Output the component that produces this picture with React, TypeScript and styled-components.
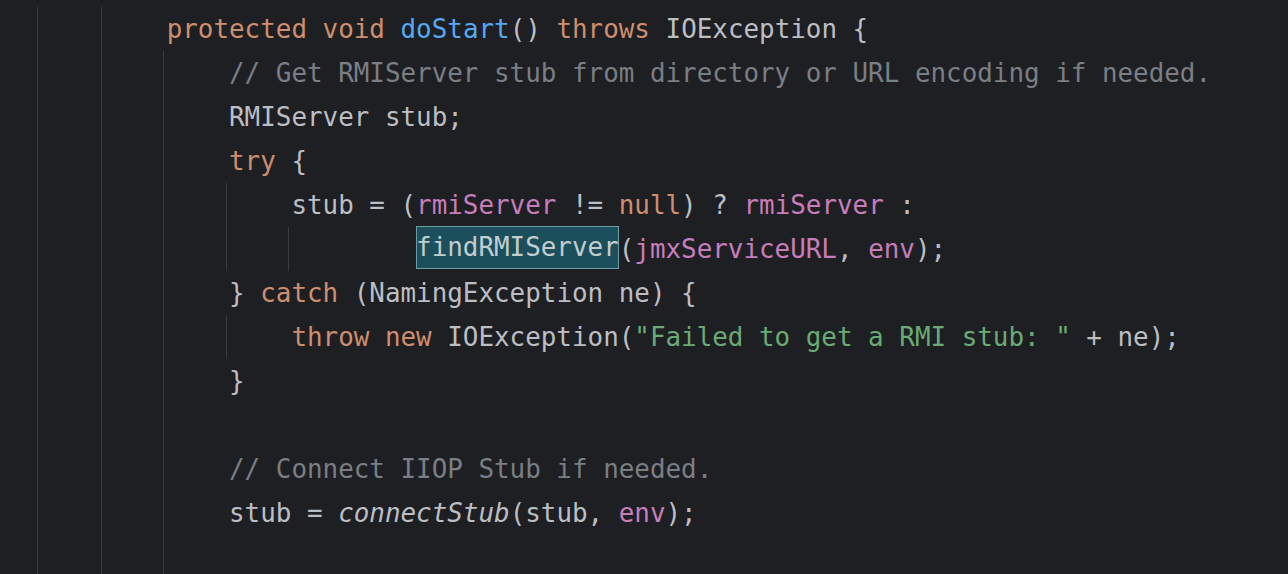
import React from "react";
import styled, { createGlobalStyle, css } from "styled-components";

const GlobalStyle = createGlobalStyle`
  html, body {
    margin: 0;
    padding: 0;
    background: #1e1f22;
    overflow: hidden;
  }
`;

const Editor = styled.div`
  box-sizing: border-box;
  width: 1288px;
  height: 574px;
  overflow: hidden;
  background: #1e1f22;
  padding: 7px 0 0 38.5px;
  font-family: "DejaVu Sans Mono", "Liberation Mono", monospace;
  font-size: 25.9px;
  color: #bcbec4;
`;

const Line = styled.div`
  display: flex;
  align-items: stretch;
  height: 44px;
  line-height: 44px;
  white-space: pre;
`;

const Guide = styled.span<{ $show: boolean }>`
  flex: none;
  box-sizing: border-box;
  width: 4ch;
  border-left: 1px solid ${(p) => (p.$show ? "#3a3c41" : "transparent")};

  &:first-child {
    width: calc(4ch + 1.5px);
    margin-left: -1.5px;
  }
`;

const Code = styled.span`
  padding-left: 3.5px;
`;

type Kind = "kw" | "fn" | "cm" | "field" | "str" | "it";

const colors: Record<Kind, string> = {
  kw: "#cf8e6d",
  fn: "#56a8f5",
  cm: "#7a7e85",
  field: "#c77dbb",
  str: "#6aab73",
  it: "#bcbec4",
};

const Tok = styled.span<{ $k: Kind }>`
  color: ${(p) => colors[p.$k]};
  ${(p) =>
    p.$k === "it" &&
    css`
      font-style: italic;
    `}
`;

const Match = styled.span`
  display: inline-block;
  height: 43px;
  line-height: 42px;
  vertical-align: top;
  margin-top: -1px;
  background: #1b4f5b;
  box-shadow: inset 0 0 0 1px #6f9ba3;
  color: #c3cdd0;
`;

type Row = { guides: boolean[]; content: React.ReactNode };

const g = (n: number, shown: number) =>
  Array.from({ length: n }, (_, i) => i < shown);

const rows: Row[] = [
  {
    guides: g(2, 2),
    content: (
      <>
        <Tok $k="kw">protected</Tok> <Tok $k="kw">void</Tok>{" "}
        <Tok $k="fn">doStart</Tok>() <Tok $k="kw">throws</Tok> IOException {"{"}
      </>
    ),
  },
  {
    guides: g(3, 3),
    content: (
      <Tok $k="cm">// Get RMIServer stub from directory or URL encoding if needed.</Tok>
    ),
  },
  { guides: g(3, 3), content: <>RMIServer stub;</> },
  {
    guides: g(3, 3),
    content: (
      <>
        <Tok $k="kw">try</Tok> {"{"}
      </>
    ),
  },
  {
    guides: g(4, 4),
    content: (
      <>
        stub = (<Tok $k="field">rmiServer</Tok> != <Tok $k="kw">null</Tok>) ?{" "}
        <Tok $k="field">rmiServer</Tok> :
      </>
    ),
  },
  {
    guides: g(5, 5),
    content: (
      <>
        {"    "}
        <Match>findRMIServer</Match>(<Tok $k="field">jmxServiceURL</Tok>,{" "}
        <Tok $k="field">env</Tok>);
      </>
    ),
  },
  {
    guides: g(3, 3),
    content: (
      <>
        {"} "}
        <Tok $k="kw">catch</Tok> (NamingException ne) {"{"}
      </>
    ),
  },
  {
    guides: g(4, 4),
    content: (
      <>
        <Tok $k="kw">throw</Tok> <Tok $k="kw">new</Tok> IOException(
        <Tok $k="str">"Failed to get a RMI stub: "</Tok> + ne);
      </>
    ),
  },
  { guides: g(3, 3), content: <>{"}"}</> },
  { guides: g(3, 3), content: null },
  {
    guides: g(3, 3),
    content: <Tok $k="cm">// Connect IIOP Stub if needed.</Tok>,
  },
  {
    guides: g(3, 3),
    content: (
      <>
        stub = <Tok $k="it">connectStub</Tok>(stub, <Tok $k="field">env</Tok>);
      </>
    ),
  },
  { guides: g(3, 3), content: null },
];

export default function App() {
  return (
    <>
      <GlobalStyle />
      <Editor>
        {rows.map((r, i) => (
          <Line key={i}>
            {r.guides.map((s, j) => (
              <Guide key={j} $show={s} />
            ))}
            <Code>{r.content}</Code>
          </Line>
        ))}
      </Editor>
    </>
  );
}
